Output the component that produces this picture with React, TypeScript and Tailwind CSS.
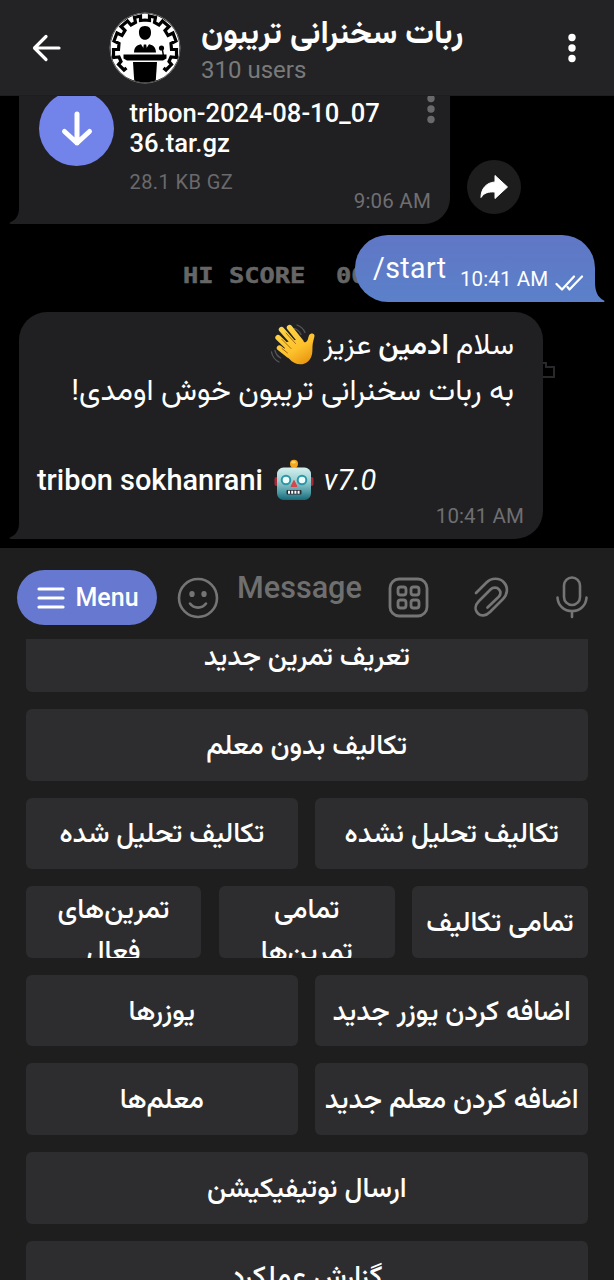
import type { ReactNode } from "react";

function BackIcon() {
  return (
    <svg width="30" height="28" viewBox="0 0 30 28" fill="none" stroke="#fff" strokeWidth="3.200" strokeLinecap="round" strokeLinejoin="round">
      <path d="M27 14H3M14 2.500L2.500 14L14 25.500" />
    </svg>
  );
}

function Dots({ className, color }: { className?: string; color: string }) {
  return (
    <svg className={className} width="8" height="30" viewBox="0 0 8 30" fill={color}>
      <circle cx="4" cy="4.500" r="3.700" />
      <circle cx="4" cy="15" r="3.700" />
      <circle cx="4" cy="25.500" r="3.700" />
    </svg>
  );
}

function Avatar() {
  return (
    <svg width="72" height="72" viewBox="0 0 72 72">
      <defs>
        <clipPath id="disc">
          <circle cx="36" cy="36" r="34.500" />
        </clipPath>
      </defs>
      <circle cx="36" cy="36" r="35.500" fill="#8a8a8a" />
      <circle cx="36" cy="36" r="34.800" fill="#000" />
      <g clipPath="url(#disc)">
        <circle cx="36" cy="36" r="35" fill="#fff" />
        <path
          d="M17.500 56L15 58L9.500 52.500L12 49.500L10 45L4.500 45.500V37.500H9.500L10 31.500L5 29L8 21L13 23.500L16 18.500L12 14.500L18.500 9L22 13L26.500 10.500L25.500 5.500L31.500 4V8.500L36 8L40.500 8.500V4L46.500 5.500L45.500 10.500L50 13L53.500 9L60 14.500L56 18.500L59 23.500L64 21L67 29L62 31.500L62.500 37.500H67.500V45.500L62 45L60 49.500L62.500 52.500L57 58L54.500 56"
          fill="none"
          stroke="#000"
          strokeWidth="3.200"
        />
        <path d="M36 14c4.700 0 6.300 3.200 6 7.200-.3 3.900-2.700 6.600-6 6.600s-5.700-2.700-6-6.600c-.3-4 1.300-7.200 6-7.200z" fill="#000" />
        <path d="M25 40.500c.3-5 2-7.300 7-8.300l4 6.300 4-6.300c5 1 6.700 3.300 7 8.300z" fill="#000" />
        <path d="M34.800 32.500h2.400l.8 5-2 2.500-2-2.500z" fill="#000" />
        <path d="M14.500 42.500H57.500V46.500L54 48.500H18L14.500 46.500Z" fill="#000" />
        <path d="M24 50H48L46.500 73H25.500Z" fill="#000" />
        <circle cx="52.500" cy="36" r="2.600" fill="#000" />
        <path d="M53.300 37L54.300 43" stroke="#000" strokeWidth="1.500" />
      </g>
    </svg>
  );
}

function TailLeft() {
  return (
    <svg className="absolute bottom-0 -left-[10px]" width="14" height="24" viewBox="0 0 14 24" fill="#202022">
      <path d="M10 0V8C10 15 7.500 19.500 1 22.500C0 23 .5 24 2 24H14V0Z" />
    </svg>
  );
}

function TailRight() {
  return (
    <svg className="absolute -right-[10px] bottom-0" width="11" height="20" viewBox="0 0 11 20" fill="#5b80c9">
      <path d="M0 0H1C1 9 3.500 15.500 10 18.500C11 19 10.500 20 9.500 20H0Z" />
    </svg>
  );
}

function WavingHand() {
  return (
    <svg width="46" height="46" viewBox="0 0 46 46" fill="none" strokeLinecap="round">
      <defs>
        <linearGradient id="skin" gradientUnits="userSpaceOnUse" x1="10" y1="4" x2="34" y2="44">
          <stop offset="0" stopColor="#ffd54a" />
          <stop offset=".6" stopColor="#fdc22c" />
          <stop offset="1" stopColor="#e8930e" />
        </linearGradient>
      </defs>
      <path d="M1.500 30c.8 4.500 3.500 8 7.500 10M5 28.500c.8 3.300 2.700 6 5.700 7.500M27 3c3.500 1.200 6.500 4 8 7.500M24.500 6.500c2.800 1 5 3 6.500 6" stroke="#55565a" strokeWidth="1.300" />
      <g stroke="url(#skin)" strokeWidth="5.400">
        <path d="M19.500 5.500L31 20" />
        <path d="M11.500 7.500L26 24" />
        <path d="M8 15.500L22 29" />
        <path d="M9.500 26L19 33.500" />
      </g>
      <path
        d="M13 31L19 36.500C24 43 33 44.500 38.500 39C43 34.500 42.300 29 42.500 24C42.700 20 44 17 44.500 14C44.900 11 40.500 10.500 39 13.500C38 16 38 18.500 36 20C34 21 32.500 19.500 30 17L17 20Z"
        fill="url(#skin)"
      />
      <path d="M16 11L25.500 21.500M12 17.500L21 26.500M12 26.500L17.500 31" stroke="#a8690f" strokeWidth="1" />
    </svg>
  );
}

function Robot() {
  return (
    <svg width="40" height="42" viewBox="0 0 40 42">
      <defs>
        <linearGradient id="metal" x1="0" y1="0" x2="0" y2="1">
          <stop offset="0" stopColor="#d5efee" />
          <stop offset=".4" stopColor="#9ed0d2" />
          <stop offset=".75" stopColor="#4f9ca6" />
          <stop offset="1" stopColor="#17697a" />
        </linearGradient>
      </defs>
      <rect x=".5" y="18" width="5" height="9" rx="2" fill="#a8283a" />
      <rect x="34.500" y="18" width="5" height="9" rx="2" fill="#a8283a" />
      <path d="M15 9.500c0-2.500 10-2.500 10 0z" fill="#a4303c" />
      <circle cx="20" cy="4.800" r="4" fill="#f6a71c" />
      <ellipse cx="19.500" cy="3.200" rx="2" ry="1.200" fill="#ffd76b" />
      <rect x="3" y="8.500" width="34" height="32.500" rx="6.500" fill="url(#metal)" />
      <g fill="#effcfc" stroke="#2a97a8" strokeWidth="2">
        <circle cx="12" cy="21" r="4.300" />
        <circle cx="28" cy="21" r="4.300" />
      </g>
      <path d="M20 21.500L23 27.500H17Z" fill="#d9434b" stroke="#d9434b" strokeLinejoin="round" />
      <rect x="12.500" y="31" width="15" height="4.500" rx="1" fill="#2b2a35" />
      <path d="M14 33.200H26.500" stroke="#fff" strokeWidth="3" strokeDasharray="2 1.200" />
    </svg>
  );
}

function Btn({ children, clip }: { children: ReactNode; clip?: boolean }) {
  return (
    <button
      className={
        clip
          ? "flex h-full min-w-0 items-start justify-center overflow-hidden rounded-[6px] bg-[#2d2d2f] px-5 pt-[2px] leading-[42px]"
          : "flex h-full min-w-0 items-center justify-center overflow-hidden rounded-[6px] bg-[#2d2d2f] leading-[42px] whitespace-nowrap"
      }
    >
      <span>{children}</span>
    </button>
  );
}

function Row({ children }: { children: ReactNode }) {
  return <div className="grid h-[71.500px] shrink-0 auto-cols-fr grid-flow-col gap-[17.300px]">{children}</div>;
}

export default function App() {
  return (
    <div className="flex h-[1280px] w-[614px] flex-col overflow-hidden bg-[#1e1e1e] font-[family-name:Roboto,Vazirmatn,'Noto_Sans_Arabic','Noto_Sans',sans-serif] text-white">
      <header className="flex h-[96px] shrink-0 items-center border-b border-[#1d1d1f] bg-[#232325]">
        <div className="ml-[32px] w-[77px]">
          <BackIcon />
        </div>
        <Avatar />
        <div className="ml-[20px] flex flex-1 flex-col items-start">
          <h1 dir="rtl" className="text-[32px] leading-[46px] font-bold whitespace-nowrap">ربات سخنرانی تریبون</h1>
          <p className="mt-px pb-[3px] text-[24px] leading-[28px] text-[#7a7a7b]">310 users</p>
        </div>
        <Dots className="mr-[38px]" color="#fff" />
      </header>

      <main className="relative flex h-[452px] shrink-0 flex-col overflow-hidden bg-black">
        <div className="absolute top-[167px] left-[183px] origin-left scale-x-[1.155] font-['DejaVu_Sans_Mono'] text-[22px] leading-[26px] font-bold whitespace-pre text-[#666] [-webkit-text-stroke:0.500px_#666]">
          HI SCORE  00
        </div>
        <svg className="absolute top-[265px] left-[538px]" width="18" height="18" viewBox="0 0 18 18" fill="none" stroke="#29292b" strokeWidth="2">
          <path d="M0 2H8V6H16V16H0" />
        </svg>

        <div className="flex items-end">
          <div className="relative ml-[19px] flex h-[128px] w-[431px] rounded-br-[26px] bg-[#202022]">
            <TailLeft />
            <div className="-mt-[5px] ml-[20px] flex size-[75px] shrink-0 items-center justify-center rounded-full bg-[#7283ea]">
              <svg width="34" height="36" viewBox="0 0 34 36" fill="none" stroke="#fff" strokeWidth="5" strokeLinecap="round" strokeLinejoin="round">
                <path d="M17 3V32M4.500 20.500L17 32L29.500 20.500" />
              </svg>
            </div>
            <div className="ml-[15.500px] w-[200px]">
              <p className="mt-[2px] text-[25.600px] leading-[30px] font-medium whitespace-nowrap">
                tribon-2024-08-10_07
                <br />
                36.tar.gz
              </p>
              <p className="mt-[12px] text-[20px] leading-[24px] tracking-[0.400px] text-[#6a6a6c]">28.1 KB GZ</p>
            </div>
            <div className="flex flex-1 flex-col items-end">
              <Dots className="-mt-[2.500px] mr-[15px]" color="#69696b" />
              <span className="mt-[65.500px] mr-[19px] text-[20.500px] leading-[24px] tracking-[0.200px] whitespace-nowrap text-[#6f6f71]">9:06 AM</span>
            </div>
          </div>
          <div className="mb-[10px] ml-[17px] flex size-[54px] items-center justify-center rounded-full bg-[#1d1d1e]">
            <svg width="28" height="24" viewBox="0 0 28 24" fill="#fff" stroke="#fff" strokeWidth="1" strokeLinejoin="round">
              <path d="M15 .5L27.500 12L15 23.500V17C8 16.500 4 18 1 22.500C1 14 6 7.500 15 7Z" />
            </svg>
          </div>
        </div>

        <div className="relative mt-[10.500px] mr-[19px] flex h-[67px] w-[240px] self-end rounded-l-[33px] rounded-tr-[33px] bg-linear-to-b from-[#6077c6] to-[#5b80c9]">
          <TailRight />
          <span className="relative mt-[15px] ml-[18px] w-[73px] text-[28.600px] leading-[36px] tracking-[0.400px]">/start</span>
          <span className="relative mt-[32px] ml-[14px] text-[20.500px] leading-[24px] tracking-[0.100px] whitespace-nowrap">10:41 AM</span>
          <svg className="relative mt-[39.500px] ml-[7px]" width="29" height="18" viewBox="0 0 29 18" fill="none" stroke="#fff" strokeWidth="2.200" strokeLinecap="round" strokeLinejoin="round">
            <path d="M1.500 10L7 15.500L19 2.500M12.500 13L14.500 15.500L27 2.500" />
          </svg>
        </div>

        <div className="relative mt-[10.500px] ml-[19px] h-[226.500px] w-[524px] rounded-t-[28px] rounded-br-[28px] bg-[#202022] pt-[9.500px] pr-[29px] pl-[18px]">
          <TailLeft />
          <p dir="rtl" className="flex h-[45px] items-center text-[29.200px] leading-[45px] whitespace-nowrap">
            <span>سلام <b className="font-semibold">ادمین</b> عزیز</span>
            <span className="mt-[2px] mr-[7px]">
              <WavingHand />
            </span>
          </p>
          <p dir="rtl" className="h-[45px] text-[30.400px] leading-[45px] whitespace-nowrap">به ربات سخنرانی تریبون خوش اومدی!</p>
          <div className="mt-[46px] flex h-[45px] items-center text-[28.900px] leading-[45px] whitespace-nowrap">
            <span className="font-medium">tribon sokhanrani</span>
            <span className="mr-[10px] ml-[11px]">
              <Robot />
            </span>
            <i>v7.0</i>
          </div>
          <p className="mt-px -mr-[10px] text-right text-[20.500px] leading-[24px] tracking-[0.100px] text-[#6f6f71]">10:41 AM</p>
        </div>
      </main>

      <section className="flex h-[91px] shrink-0 items-start bg-[#1e1e1e] pt-[22px] text-[#757575]">
        <button className="ml-[17px] flex h-[55px] w-[140px] items-center rounded-full bg-[#6678cf] pt-px pl-[19.500px] text-[25px] font-medium text-white">
          <svg className="mr-[11px]" width="28" height="22" viewBox="0 0 28 22" stroke="#fff" strokeWidth="3.200" strokeLinecap="round">
            <path d="M2 2H26M2 11H26M2 20H26" />
          </svg>
          Menu
        </button>
        <svg className="mt-[6.500px] ml-[20px]" width="42" height="42" viewBox="0 0 42 42" fill="none" stroke="currentColor" strokeWidth="2.600" strokeLinecap="round">
          <circle cx="21" cy="21" r="19" />
          <path d="M13 26.500C17 32 25 32 29 26.500" />
          <ellipse cx="15" cy="17" rx="1.400" ry="1.800" fill="currentColor" />
          <ellipse cx="27" cy="17" rx="1.400" ry="1.800" fill="currentColor" />
        </svg>
        <span className="ml-[18px] w-[151px] text-[30.600px] leading-[36px] font-medium text-[#6f6f6f]">Message</span>
        <svg className="mt-[6.500px]" width="42" height="42" viewBox="0 0 42 42" fill="none" stroke="currentColor" strokeWidth="2.800">
          <rect x="2" y="2" width="37" height="37" rx="9" />
          <rect x="10" y="10" width="8" height="8" rx="2.500" />
          <rect x="23" y="10" width="8" height="8" rx="2.500" />
          <rect x="10" y="23" width="8" height="8" rx="2.500" />
          <rect x="23" y="23" width="8" height="8" rx="2.500" />
        </svg>
        <svg className="mt-[6px] ml-[42px]" width="38" height="42" viewBox="0 0 38 42" fill="none" stroke="currentColor" strokeWidth="2.700" strokeLinecap="round">
          <path d="M4 17L14.500 6.500C19.500 1.500 27.500 1.500 32 6.500C36.500 11.500 35.500 18.500 31 23L18 36C14 40 9 40.500 6 37.500C2.500 34 3 29 7 25L18.500 13.500C21 11 25 11 27 13.500C29 15.500 29 18.500 26.500 21L15.500 31.500" />
        </svg>
        <svg className="mt-[5px] ml-[45px]" width="34" height="45" viewBox="0 0 34 45" fill="none" stroke="currentColor" strokeWidth="2.600" strokeLinecap="round">
          <rect x="9" y="2.500" width="16" height="27.500" rx="8" />
          <path d="M2.500 22.500C3 31 9.500 36 17 36S31 31 31.500 22.500M17 36V42" />
        </svg>
      </section>

      <section dir="rtl" className="flex min-h-0 flex-1 flex-col overflow-hidden bg-[#1e1e1e] pr-[26px] pl-[25.500px] text-[27.700px] font-medium">
        <div className="-mt-[18.500px] flex flex-col gap-[17.100px]">
          <Row>
            <Btn>تعریف تمرین جدید</Btn>
          </Row>
          <Row>
            <Btn>تکالیف بدون معلم</Btn>
          </Row>
          <Row>
            <Btn>تکالیف تحلیل نشده</Btn>
            <Btn>تکالیف تحلیل شده</Btn>
          </Row>
          <Row>
            <Btn>تمامی تکالیف</Btn>
            <Btn clip>تمامی تمرین‌ها</Btn>
            <Btn clip>تمرین‌های فعال</Btn>
          </Row>
          <Row>
            <Btn>اضافه کردن یوزر جدید</Btn>
            <Btn>یوزرها</Btn>
          </Row>
          <Row>
            <Btn>اضافه کردن معلم جدید</Btn>
            <Btn>معلم‌ها</Btn>
          </Row>
          <Row>
            <Btn>ارسال نوتیفیکیشن</Btn>
          </Row>
          <Row>
            <Btn>گزارش عملکرد</Btn>
          </Row>
        </div>
      </section>
    </div>
  );
}
